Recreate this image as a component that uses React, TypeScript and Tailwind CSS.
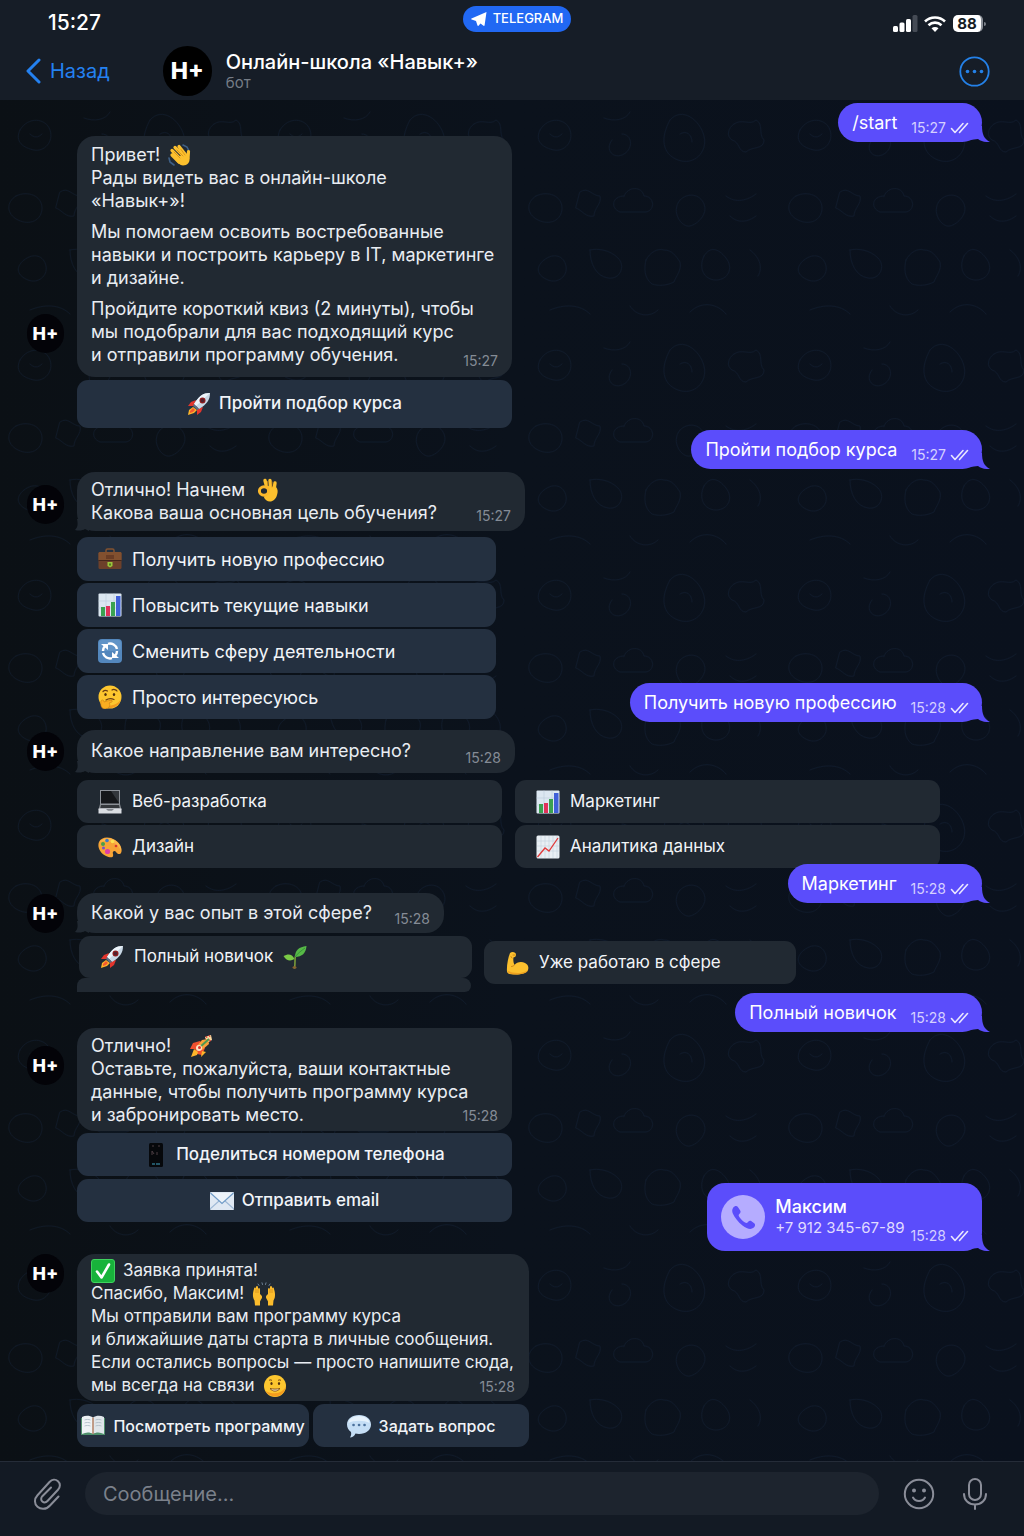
import React, { useState } from "react";
import clsx from "clsx";

type IconProps = { className?: string };

/* ---------- Emoji ---------- */

const emojiPaths: Record<string, React.ReactNode> = {
  wave: (
    <>
      <path d="M15 2l4 2 2 4M1 15l1 4 4 3" fill="none" stroke="#3f5f86" strokeWidth="1.6" strokeLinecap="round" />
      <g stroke="#fcc02e" strokeWidth="3.2" strokeLinecap="round">
        <path d="M4 12l7 7M4 7.500l9 9M7 4.500l9 9M11 3.500l8 10" />
        <path d="M20.500 8.500l-.5 7" />
      </g>
      <path d="M7 16l10-6 4 4c2 5-2 8.500-6 8.500-3 0-6-3-8-6.500z" fill="#fcc02e" />
      <path d="M6 9l6 6M9 7l6 6M13 6.500l4 5.500" stroke="#d58d16" strokeWidth=".8" strokeLinecap="round" />
    </>
  ),
  rocket: (
    <>
      <path d="M9 8l-5 2-3 4 6 0zM16 15l-2 5-4 3 0-6z" fill="#e2352d" />
      <path d="M6 15l-4 3-1 5 6-2 3-3z" fill="#fdb52a" />
      <path d="M6 16l-3 3 0 2 3-1 2-2z" fill="#f5582f" />
      <path d="M23 1c-7 0-11 3-16 11l5 5C20 12 23 8 23 1z" fill="#c9d8e6" />
      <path d="M23 1c-7 0-11 3-16 11l2 2z" fill="#edf4fa" />
      <circle cx="15.500" cy="8.500" r="3" fill="#8d1d1f" />
      <circle cx="15.500" cy="8.500" r="1.700" fill="#4f2230" />
      <path d="M7 12l5 5-2 1-4-4z" fill="#5d6d80" />
    </>
  ),
  firework: (
    <>
      <path d="M11 7l-7 2-3 6 5 0 2 5 5 1 3-7z" fill="#f0502e" />
      <path d="M5 15l-3 8 6-2 1-3zM13 17l-1 6 5-5z" fill="#fdb52a" />
      <path d="M16 3l6-2 1 5-5 3z" fill="#fbd9a0" />
      <path d="M19 5l-6 1-5 6 5 4 7-6z" fill="#f9a13a" />
      <path d="M20 5l-9 8" stroke="#4e9a53" strokeWidth="2" />
      <circle cx="10" cy="14" r="3" fill="#fde3c4" />
      <circle cx="10.500" cy="13.500" r="1.500" fill="#d9302c" />
      <path d="M20 1l1 2M17 2l1 2M22 7l-2-1" stroke="#e2352d" strokeWidth="1" />
    </>
  ),
  ok: (
    <>
      <path d="M10 10L8 2.500M13.500 10L13 2.500M17 12L18 5" stroke="#fcc02e" strokeWidth="3.400" strokeLinecap="round" />
      <path d="M10 8l9 1c2 2 2 5 1 8-1 4-4 6.500-7 6.500-3 0-5-2-6-4z" fill="#fcc02e" />
      <ellipse cx="7" cy="13" rx="4.600" ry="4.200" fill="#212932" stroke="#fcb82a" strokeWidth="3" />
      <path d="M10.500 3.500v4M15 4v5" stroke="#d58d16" strokeWidth=".8" fill="none" strokeLinecap="round" />
    </>
  ),
  briefcase: (
    <>
      <path d="M8 6V3.500C8 2.500 8.500 2 9.500 2h5c1 0 1.500.5 1.500 1.500V6" fill="none" stroke="#83522f" strokeWidth="1.500" />
      <rect x=".5" y="5" width="23" height="17" rx="1.500" fill="#6d402a" />
      <path d="M.5 6.500c0-1 .5-1.500 1.500-1.500h20c1 0 1.500.5 1.500 1.500V13H.5z" fill="#82502f" />
      <path d="M.5 13h23v1H.5z" fill="#45271b" />
      <rect x="8" y="8" width="8" height="4" fill="#693c25" />
      <path d="M9.500 15h5v4l-2.500 1.500L9.500 19z" fill="#9bc53d" />
      <path d="M11 16.500h2v2h-2z" fill="#527a20" />
    </>
  ),
  chart: (
    <>
      <rect x=".5" y=".5" width="23" height="23" rx="1" fill="#dce7f1" />
      <path d="M.5 8h23M.5 15h23M8 .5v23M16 .5v23" stroke="#bdcddc" strokeWidth=".6" />
      <path d="M3 14h4v9H3zM13 9h4v14h-4z" fill="#3ba151" />
      <path d="M8 13h4v10H8z" fill="#e0325a" />
      <path d="M18 3h4.500v20H18z" fill="#3f5fd8" />
    </>
  ),
  cycle: (
    <>
      <rect width="24" height="24" rx="4" fill="#5387bd" />
      <rect x="1" y="1" width="22" height="11" rx="3" fill="#6b9dcd" opacity=".6" />
      <path d="M10 4.800A7.300 7.300 0 0 1 19 10M14 19.200A7.300 7.300 0 0 1 5 14M5 12a7 7 0 0 1 2-5M19 12a7 7 0 0 1-2 5" fill="none" stroke="#fff" strokeWidth="2.400" />
      <path d="M3 5h7v6zM21 19h-7v-6z" fill="#fff" />
    </>
  ),
  thinking: (
    <>
      <circle cx="12" cy="12" r="11.500" fill="#fdc62f" />
      <path d="M4 20a11.500 11.500 0 0 0 19-6c-3 6-11 8-19 6z" fill="#f39a1d" />
      <path d="M5 6.500c1-1 3-1.300 4.500-.5M14 5c1.500-1 4-.5 5 1" stroke="#6b3d12" strokeWidth="1.200" fill="none" strokeLinecap="round" />
      <ellipse cx="7.500" cy="9.500" rx="1.200" ry="1.600" fill="#50300f" />
      <ellipse cx="16" cy="9.500" rx="1.200" ry="1.600" fill="#50300f" />
      <path d="M8 15c3-2 6-1.500 8-.5" stroke="#6b3d12" strokeWidth="1.200" fill="none" strokeLinecap="round" />
      <path d="M3 16c1-2 3-1 3 1 3-1 6-2 8-1.500 1 .8 0 1.800-3 2.500 2 2 0 6-4 6-3 0-5-3-4-8z" fill="#f9ad21" stroke="#c97a12" strokeWidth=".6" />
    </>
  ),
  laptop: (
    <>
      <path d="M2 0h20v14H2z" fill="#8d9299" />
      <path d="M3 1h18v12.500H3z" fill="#15171a" />
      <path d="M13 1h8v12z" fill="#33373c" />
      <path d="M2 14h20l1.500 6H.5z" fill="#8b8f95" />
      <path d="M3 15h18l.7 3H2.300z" fill="#34373b" />
      <path d="M.5 18.500h23V23.500H.5z" fill="#dadde2" />
      <path d="M8 19h8l-2 1.800h-4z" fill="#83878d" />
    </>
  ),
  palette: (
    <>
      <path d="M1 7c2-5 10-6 16-2 5 3 8 9 6 13-1 2-4 1-5-1s-4-1-3 2c1 4-3 4-7 2C2 18-1 12 1 7z" fill="#f7a436" />
      <path d="M2 7c2-4 9-5 15-2 4 3 7 7 6 11-3-7-10-12-21-9z" fill="#ffbd55" opacity=".7" />
      <circle cx="5" cy="9" r="2" fill="#4a9f4b" />
      <circle cx="9" cy="5.500" r="1.800" fill="#3c78c8" />
      <circle cx="14.500" cy="6.500" r="1.800" fill="#fbe14f" />
      <circle cx="18" cy="11" r="1.300" fill="#d9372f" />
      <circle cx="9.500" cy="16.500" r="2.600" fill="#df3fa5" />
      <circle cx="5.500" cy="13" r="1.500" fill="#7a51cc" />
    </>
  ),
  trend: (
    <>
      <rect x=".5" y=".5" width="23" height="23" rx="1.500" fill="#e9eff4" />
      <path d="M5 1v22M9 1v22M13 1v22M17 1v22M21 1v22M1 6h22M1 11h22M1 16h22" stroke="#c4d2de" strokeWidth=".6" />
      <path d="M1.500 22L9 13l4 3 9-13" fill="none" stroke="#e23b3b" strokeWidth="1.300" />
    </>
  ),
  seedling: (
    <>
      <path d="M11.500 23c1-5 0-9 1-12" stroke="#7a9b3a" strokeWidth="1.600" fill="none" strokeLinecap="round" />
      <path d="M12 12C12 5 16 2 23.500 1 23 8 19 12 12 12z" fill="#57b947" />
      <path d="M11.500 14C9 8.500 5 8.500.5 11c3 5 7 5.500 11 3z" fill="#7bcb46" />
      <path d="M12 12c3-4 6-6 10-9" stroke="#2d8a36" strokeWidth=".8" fill="none" />
      <ellipse cx="11.500" cy="22.500" rx="2" ry="1.200" fill="#88612f" />
    </>
  ),
  muscle: (
    <>
      <path d="M5 2c2-2 6-1 6 1.500S9.500 6 8.500 6.500C8 9 8.500 12 9.500 14c2-3 7-4 10.500-2 3 1.500 4 4 3 7-1 3-7 4.500-12 4.500-5 0-8.500 0-9-3C1.500 15 3 7 5 2z" fill="#fcc02e" />
      <path d="M2.500 19.500c5 3 14 4 20.500-.5-1 3.500-7 4.500-12 4.500-5 0-8-.5-8.500-4z" fill="#eda01f" />
      <path d="M9.500 14c-1 1-2 1.500-3 1.500M7 7L6 5.500M10 4H8" stroke="#c88114" strokeWidth=".9" fill="none" strokeLinecap="round" />
    </>
  ),
  phone: (
    <>
      <rect x="5" y="0" width="14" height="24" rx="1.500" fill="#06080b" />
      <path d="M8 3h2M14 3h2M8 8l2 3M8 8v4M13 9v3" stroke="#4a3d42" strokeWidth="1" />
      <path d="M8 21h3M12 21h4" stroke="#2c6f85" strokeWidth="1.400" />
    </>
  ),
  envelope: (
    <>
      <rect x="0" y="3" width="24" height="18" rx="1" fill="#dfe8f3" />
      <path d="M0 20l9-8M24 20l-9-8" stroke="#9db8d6" strokeWidth="1.100" />
      <path d="M.5 4L12 14.500 23.500 4" fill="#edf3fa" stroke="#6f9ac6" strokeWidth="1.200" />
    </>
  ),
  check: (
    <>
      <rect x=".5" y=".5" width="23" height="23" rx="2.500" fill="#18b33b" stroke="#3fd25e" />
      <path d="M6 12.500l4.500 6 7.500-13" fill="none" stroke="#fff" strokeWidth="2.600" strokeLinecap="round" strokeLinejoin="round" />
    </>
  ),
  hands: (
    <>
      <path d="M6 2l1 1.500M10 .8l.5 1.700M14 .8l-.5 1.700M18 2l-1 1.500" stroke="#6d8094" strokeWidth="1" strokeLinecap="round" />
      <path d="M2 7c0-2 2-2 2 0V5.500c0-2 2-2 2 0V7c1-2 2-1 2 1v4l1.500 1.500c1 1 .5 3-.5 4l-1 2v4H3l-.5-5C0 15 1 10 2 7z" fill="#fcbc2c" />
      <path d="M22 7c0-2-2-2-2 0V5.500c0-2-2-2-2 0V7c-1-2-2-1-2 1v4l-1.500 1.500c-1 1-.5 3 .5 4l1 2v4H21l.5-5C24 15 23 10 22 7z" fill="#fcbc2c" />
      <path d="M4 7v4M6 7v4M20 7v4M18 7v4" stroke="#cf8717" strokeWidth=".7" />
    </>
  ),
  smile: (
    <>
      <circle cx="12" cy="12" r="11" fill="#fdc62f" />
      <path d="M2.500 17A11 11 0 0 0 23 12c-2 6-11 10-20.500 5z" fill="#f49c1e" />
      <path d="M6 6.500c.8-.8 2-.8 3 0M15 6.500c1-.8 2-.8 3 0" stroke="#6b3d12" strokeWidth="1" fill="none" />
      <ellipse cx="8.500" cy="9.500" rx="1.100" ry="1.500" fill="#50300f" />
      <ellipse cx="16" cy="9.500" rx="1.100" ry="1.500" fill="#50300f" />
      <path d="M7 14.500c3 3.500 7 3.500 10 0-3 .8-7 .8-10 0z" fill="#fff1d0" stroke="#7a4712" strokeWidth=".9" />
    </>
  ),
  book: (
    <>
      <path d="M0 4h24v17H0z" fill="#4f8f6b" />
      <path d="M1 3c4-2 8-1.500 11 .5V20c-3-2-7-2-11 0z" fill="#eef2f5" />
      <path d="M23 3c-4-2-8-1.500-11 .5V20c3-2 7-2 11 0z" fill="#dfe5ea" />
      <path d="M12 3.500V20" stroke="#b07a5c" strokeWidth="1.400" />
      <path d="M3.500 6c2-.7 4-.7 6 0M3.500 9c2-.7 4-.7 6 0M3.500 12c2-.7 4-.7 6 0M14.500 6c2-.7 4-.7 6 0M14.500 9c2-.7 4-.7 6 0M14.500 12c2-.7 4-.7 6 0" stroke="#a9b7c3" strokeWidth=".8" fill="none" />
    </>
  ),
  speech: (
    <>
      <path d="M12 1c7 0 12 4 12 9.500S19 20 12 20c-1.500 0-2.500-.2-3.500-.5C7.500 22 5 23.500 3 23.500c1-1.500 1.500-3.500 1-5.500C1.500 16 0 13.500 0 10.500 0 5 5 1 12 1z" fill="#c5def5" />
      <path d="M12 2c6 0 10 3 10.500 7-5-3-16-3-21 0C2 5 6 2 12 2z" fill="#e6f2fc" />
      <path d="M6.500 11h.1M12 11h.1M17.500 11h.1" stroke="#4b719c" strokeWidth="2.600" strokeLinecap="round" />
    </>
  ),
};

function Emoji({ name, className = "h-6 w-6" }: { name: string } & IconProps) {
  return (
    <svg viewBox="0 0 24 24" aria-hidden="true" className={clsx("shrink-0", className)}>
      {emojiPaths[name]}
    </svg>
  );
}

/* ---------- Icons ---------- */

function Ticks() {
  return (
    <svg viewBox="0 0 20 12" fill="none" stroke="#e9e6ff" strokeWidth="1.600" strokeLinecap="round" strokeLinejoin="round" className="h-3 w-5">
      <path d="M1.500 6.500L5 10.500 13 1.500M9.500 10.500L17.500 1.500" />
    </svg>
  );
}

function Tail() {
  return (
    <svg viewBox="0 0 20 16" fill="#5b4dfb" className="absolute -right-2 bottom-0 h-4 w-5">
      <path d="M12 0c0 8 2 13 8 16-5 .3-9-.6-12-3L0 14V0z" />
    </svg>
  );
}

function BotTail() {
  return (
    <svg viewBox="0 0 14 12" fill="#212932" className="absolute -left-[2px] bottom-0 h-3 w-[14px]">
      <path d="M2 0c1 5 1 8-2 11 4 1 8 .5 10-1L14 12V0z" />
    </svg>
  );
}

function Doodles() {
  return (
    <svg aria-hidden="true" className="absolute inset-0 -z-10 h-full w-full">
      <defs>
        <pattern id="doodles" width="260" height="230" patternUnits="userSpaceOnUse">
          <g fill="none" stroke="#14233a" strokeWidth="1" strokeLinecap="round" opacity=".45">
            <path d="M20 30c8-14 26-12 30 0s-6 22-16 20-20-8-14-20zM30 34c4 4 8 4 12 0" />
            <path d="M84 18c10 4 22 2 26-6M92 40c-8 10 2 20 12 14s8-20-2-20" />
            <path d="M150 20c-10 18-8 34 8 40s30-8 26-24-22-30-34-16zM160 34c6-4 12 0 12 8" />
            <path d="M214 24c8-6 16 2 22-4 8 4 2 14 8 20 0 10-12 6-18 12-8 0-6-10-14-12-6-4-4-12 2-16z" />
            <path d="M16 96c12-6 26 0 26 12s-12 18-24 12-12-18-2-24zM60 92c8-6 12 4 20 4 2 8-6 12-6 20-8 2-12-6-18-8z" />
            <path d="M104 96c4-10 18-10 20 0 10 0 12 14 2 16h-26c-10-4-8-16 4-16z" />
            <path d="M160 100c8-8 20-6 24 4s-6 20-14 22-20-14-10-26zM206 96c10 8 22 4 30-2M210 116c8 8 18 6 26 0" />
            <path d="M24 160c10-8 20-4 22 6s-8 18-18 14-14-12-4-20zM70 150c0 14 6 26 18 28s18-12 10-20-20-10-28-8z" />
            <path d="M126 160c4-8 12-12 18-10 8 0 12 6 16 12 2 8-4 14-6 20-8 4-16 4-22 2-8-6-8-16-6-24zM184 156c-6 12 0 24 12 24s18-12 10-22-16-12-22-2zM230 150c8 6 14 16 8 26" />
            <path d="M30 210c14-6 30-6 40 4M110 206c6 10 20 12 28 4M170 212c12-12 28-8 36 2" />
          </g>
        </pattern>
      </defs>
      <rect width="100%" height="100%" fill="url(#doodles)" />
    </svg>
  );
}

/* ---------- Chat parts ---------- */

function Avatar({ className }: IconProps) {
  return (
    <div className={clsx("flex h-[39px] w-[37px] shrink-0 items-center justify-center rounded-full bg-[#030308] text-[18px] font-extrabold text-white", className)}>
      H+
    </div>
  );
}

function Line({ children, className = "gap-2" }: { children: React.ReactNode; className?: string }) {
  return <p className={clsx("flex h-[23px] items-center whitespace-nowrap", className)}>{children}</p>;
}

function BotMessage({ children, time, className, timeClass, avatarClass, size = "text-[18px]", tail }: {
  children: React.ReactNode;
  time: string;
  className: string;
  timeClass: string;
  avatarClass?: string;
  size?: string;
  tail?: boolean;
}) {
  return (
    <div className="flex gap-[13px]">
      <Avatar className={avatarClass} />
      <div className={clsx("relative max-w-full rounded-[18px] bg-[#212932] px-[14px] text-[#e9edf2]", size, className)}>
        {tail && <BotTail />}
        {children}
        <time className={clsx("block text-right text-[14px] leading-4 text-[#858c96]", timeClass)}>{time}</time>
      </div>
    </div>
  );
}

function BotButton({ emoji, label, variant = "blue", center, size = "text-[17px]", className, after }: {
  emoji: string;
  label: string;
  variant?: "blue" | "gray";
  center?: boolean;
  size?: string;
  className?: string;
  after?: string;
}) {
  return (
    <button
      type="button"
      className={clsx(
        "flex items-center whitespace-nowrap rounded-[11px] text-[#f1f4f8]",
        variant === "blue" ? "bg-[#243040]" : "bg-[#212932]",
        center ? "justify-center gap-2 font-medium" : "gap-[10px] pl-[21px]",
        size,
        className
      )}
    >
      <Emoji name={emoji} />
      <span>{label}</span>
      {after && <Emoji name={after} />}
    </button>
  );
}

function UserMessage({ text, time, className }: { text: string; time: string; className?: string }) {
  return (
    <div className={clsx("relative ml-auto flex h-[39px] w-fit shrink-0 items-center rounded-[20px] bg-[#5b4dfb] pl-[14px] pr-3 text-white", className)}>
      <Tail />
      <span className="relative whitespace-nowrap text-[18px]">{text}</span>
      <UserTime time={time} className="ml-[14px] mt-[11px]" />
    </div>
  );
}

function UserTime({ time, className }: { time: string; className?: string }) {
  return (
    <span className={clsx("relative flex items-center gap-1 text-[14px] leading-4 text-[#d5d0ff]", className)}>
      <time>{time}</time>
      <Ticks />
    </span>
  );
}

/* ---------- Header ---------- */

function StatusBar() {
  return (
    <div className="flex h-[42px] items-start px-[38px] pt-[6px]">
      <div className="mt-[5px] flex-1 basis-0 pl-[10px]">
        <time className="block text-[21px] font-medium leading-6 text-white">15:27</time>
      </div>
      <div className="flex h-[26px] items-center gap-[6px] rounded-full bg-[#2168f3] px-2 text-[13px] font-medium text-white">
        <svg viewBox="0 0 16 16" fill="#fff" className="h-4 w-4">
          <path d="M15.500 1L.5 7.500c-.5.3-.4.800.1 1L5 10l1.500 4.500c.2.500.7.500 1 .2l2-2.200 3 2.300c.5.300 1 .1 1.100-.5z" />
        </svg>
        TELEGRAM
      </div>
      <div className="mt-[9px] flex flex-1 basis-0 items-center justify-end">
        <svg viewBox="0 0 25 17" fill="#fff" className="h-[17px] w-[25px]">
          <rect x="0" y="11" width="5" height="6" rx="1.500" />
          <rect x="6.500" y="7.500" width="5" height="9.500" rx="1.500" />
          <rect x="13" y="4" width="5" height="13" rx="1.500" />
          <rect x="19.500" y="0" width="5" height="17" rx="1.500" fill="#454b55" />
        </svg>
        <svg viewBox="0 0 22 16" fill="none" stroke="#fff" strokeWidth="2.600" className="ml-[6px] h-4 w-[22px]">
          <path d="M1 5.500c5.500-5.300 14.500-5.300 20 0M4.500 9.200c3.700-3.400 9.300-3.400 13 0" />
          <path d="M7.500 12.300c2-1.800 5-1.800 7 0L11 16z" fill="#fff" stroke="none" />
        </svg>
        <div className="ml-[7px] flex h-[17px] w-[30px] items-center justify-center rounded-[5px] border-r-2 border-[#8c9199] bg-white text-[15px] font-bold leading-none text-[#151b24]">88</div>
        <div className="ml-px h-1 w-[2px] rounded-r bg-[#7b818a]" />
      </div>
    </div>
  );
}

function ChatHeader() {
  return (
    <header className="bg-[#161d27]">
      <StatusBar />
      <div className="flex h-[58px] items-center pl-[25px] pr-[34px]">
        <button type="button" className="flex items-center gap-[8px] text-[20px] text-[#2481f0]">
          <svg viewBox="0 0 17 26" fill="none" stroke="currentColor" strokeWidth="3" strokeLinecap="round" strokeLinejoin="round" className="h-[26px] w-[17px]">
            <path d="M14 2L3 13l11 11" />
          </svg>
          Назад
        </button>
        <div className="ml-[53px] flex h-[50px] w-[49px] items-center justify-center rounded-full bg-black text-[23px] font-extrabold text-white">H+</div>
        <div className="ml-[14px]">
          <h1 className="text-[20px] font-medium leading-6 text-white">Онлайн-школа «Навык+»</h1>
          <p className="text-[15px] leading-[18px] text-[#757c86]">бот</p>
        </div>
        <button type="button" aria-label="Меню" className="ml-auto">
          <svg viewBox="0 0 31 31" className="h-[31px] w-[31px]">
            <circle cx="15.500" cy="15.500" r="14.200" fill="none" stroke="#2481e8" strokeWidth="1.800" />
            <g fill="#2481e8">
              <circle cx="8.500" cy="15.500" r="1.800" />
              <circle cx="15.500" cy="15.500" r="1.800" />
              <circle cx="22.500" cy="15.500" r="1.800" />
            </g>
          </svg>
        </button>
      </div>
    </header>
  );
}

/* ---------- Footer ---------- */

function Composer() {
  const [value, setValue] = useState("");

  return (
    <footer className="flex h-[75px] items-start border-t border-[#252c38] bg-[#131a24] pl-[33px] pr-[37px] pt-[10px] text-[#8a8d98]">
      <button type="button" aria-label="Прикрепить файл" className="mt-[6px]">
        <svg viewBox="0 0 28 32" fill="none" stroke="currentColor" strokeWidth="2" strokeLinecap="round" strokeLinejoin="round" className="h-8 w-7">
          <path d="M25.500 18.500L17 27.500c-4 4.500-9.500 4-12.500 1.300-3.500-3-3.300-8 0-11.500L16.500 4C19 1.300 22.500 1 25 3.200s2.500 6 0 8.500L14.500 23c-1.500 1.600-3.700 1.700-5.200.4s-1.500-3.500 0-5.200L18 9.500" />
        </svg>
      </button>
      <input
        type="text"
        aria-label="Сообщение"
        placeholder="Сообщение..."
        value={value}
        onChange={(e) => setValue(e.target.value)}
        className="ml-6 h-[43px] min-w-0 flex-1 rounded-full bg-[#1d242e] px-[18px] text-[20px] text-white outline-none placeholder:text-[#7b818b]"
      />
      <button type="button" aria-label="Эмодзи" className="ml-6 mt-[6px]">
        <svg viewBox="0 0 32 32" fill="none" stroke="currentColor" strokeWidth="2" strokeLinecap="round" className="h-8 w-8">
          <circle cx="16" cy="16" r="14.200" />
          <circle cx="11" cy="12.500" r="1" fill="currentColor" />
          <circle cx="21" cy="12.500" r="1" fill="currentColor" />
          <path d="M10 19.500c2.500 4.500 9.500 4.500 12 0" />
        </svg>
      </button>
      <button type="button" aria-label="Голосовое сообщение" className="ml-[28px] mt-[6px]">
        <svg viewBox="0 0 24 32" fill="none" stroke="currentColor" strokeWidth="2" strokeLinecap="round" className="h-8 w-6">
          <rect x="6" y="1" width="12" height="21" rx="6" />
          <path d="M1 16c0 6 4.500 10.500 11 10.500S23 22 23 16M12 26.500V31" />
        </svg>
      </button>
    </footer>
  );
}

const goals = [
  { emoji: "briefcase", label: "Получить новую профессию" },
  { emoji: "chart", label: "Повысить текущие навыки" },
  { emoji: "cycle", label: "Сменить сферу деятельности" },
  { emoji: "thinking", label: "Просто интересуюсь" },
];

const directions = [
  { emoji: "laptop", label: "Веб-разработка" },
  { emoji: "chart", label: "Маркетинг" },
  { emoji: "palette", label: "Дизайн" },
  { emoji: "trend", label: "Аналитика данных" },
];

export default function App() {
  return (
    <div className="flex min-h-screen flex-col bg-[#0b121c] font-['Inter','Liberation_Sans',sans-serif]">
      <ChatHeader />

      <main className="relative isolate flex-1 bg-linear-to-r from-[#0b1015] via-[#0b121c] to-[#0a111d] pb-[14px] pl-[27px] pr-[42px] pt-[3px]">
        <Doodles />

        <UserMessage text="/start" time="15:27" />

        {/* Приветствие */}
        <section className="-mt-[6px]">
          <BotMessage time="15:27" className="w-[435px] pb-2 pt-[7px]" timeClass="-mt-[13px]" avatarClass="mb-6 self-end">
            <Line>Привет! <Emoji name="wave" /></Line>
            <Line>Рады видеть вас в онлайн-школе</Line>
            <Line>«Навык+»!</Line>
            <Line className="mt-2">Мы помогаем освоить востребованные</Line>
            <Line>навыки и построить карьеру в IT, маркетинге</Line>
            <Line>и дизайне.</Line>
            <Line className="mt-2">Пройдите короткий квиз (2 минуты), чтобы</Line>
            <Line>мы подобрали для вас подходящий курс</Line>
            <Line>и отправили программу обучения.</Line>
          </BotMessage>
          <BotButton emoji="rocket" label="Пройти подбор курса" center className="ml-[50px] mt-[3px] h-12 w-[435px]" />
        </section>

        <UserMessage text="Пройти подбор курса" time="15:27" className="mt-[2px]" />

        {/* Цель обучения */}
        <section className="mt-[3px] flex items-end justify-between">
          <div>
            <BotMessage time="15:27" tail className="w-[448px] pb-[7px] pt-[6px]" timeClass="-mt-4" avatarClass="mt-[13px]">
              <Line className="gap-3">Отлично! Начнем <Emoji name="ok" /></Line>
              <Line>Какова ваша основная цель обучения?</Line>
            </BotMessage>
            <div className="ml-[50px] mt-[6px] flex w-[419px] flex-col gap-[2px]">
              {goals.map((goal) => (
                <BotButton key={goal.label} emoji={goal.emoji} label={goal.label} size="text-[18px]" className="h-11" />
              ))}
            </div>
          </div>
          <UserMessage text="Получить новую профессию" time="15:28" className="-mb-[3px]" />
        </section>

        {/* Направление */}
        <section className="mt-[11px]">
          <BotMessage time="15:28" tail className="w-[438px] pb-[7px] pt-[9px]" timeClass="-mt-3" avatarClass="mt-[2px]">
            <Line>Какое направление вам интересно?</Line>
          </BotMessage>
          <div className="ml-[50px] mr-[42px] mt-[7px] grid grid-cols-2 gap-x-[13px] gap-y-[2px]">
            {directions.map((item) => (
              <BotButton key={item.label} emoji={item.emoji} label={item.label} variant="gray" className="h-[43px]" />
            ))}
          </div>
        </section>

        <UserMessage text="Маркетинг" time="15:28" className="-mt-1" />

        {/* Опыт */}
        <section className="-mt-[10px]">
          <BotMessage time="15:28" tail className="w-[367px] pb-[6px] pt-2" timeClass="-mt-[13px]" avatarClass="mt-px">
            <Line>Какой у вас опыт в этой сфере?</Line>
          </BotMessage>
          <div className="ml-[50px] mt-[3px] flex items-start gap-3">
            <div className="w-[395px]">
              <BotButton emoji="rocket" label="Полный новичок" after="seedling" variant="gray" className="ml-[2px] h-[42px] w-[393px]" />
              <div className="h-[14px] w-[394px] rounded-b-[8px] rounded-t-[10px] rounded-bl-none bg-[#212932]" />
            </div>
            <BotButton emoji="muscle" label="Уже работаю в сфере" variant="gray" className="mt-[5px] h-[43px] w-[312px]" />
          </div>
        </section>

        <UserMessage text="Полный новичок" time="15:28" className="mt-px" />

        {/* Контакты */}
        <section className="-mt-1 flex items-end justify-between">
          <div>
            <BotMessage time="15:28" className="w-[435px] pb-[7px] pt-[6px]" timeClass="-mt-[18px]" avatarClass="mt-[18px]">
              <Line className="gap-[18px]">Отлично! <Emoji name="firework" /></Line>
              <Line>Оставьте, пожалуйста, ваши контактные</Line>
              <Line>данные, чтобы получить программу курса</Line>
              <Line>и забронировать место.</Line>
            </BotMessage>
            <div className="ml-[50px] mt-[2px] flex w-[435px] flex-col gap-[3px]">
              <BotButton emoji="phone" label="Поделиться номером телефона" center className="h-[43px]" />
              <BotButton emoji="envelope" label="Отправить email" center className="h-[43px]" />
            </div>
          </div>

          <div className="relative -mb-[29px] flex h-[68px] shrink-0 items-center rounded-[18px] bg-[#5b4dfb] pl-[14px] pr-3 text-white">
            <Tail />
            <svg viewBox="0 0 44 44" className="h-11 w-11">
              <circle cx="22" cy="22" r="22" fill="#b5acff" />
              <path d="M12 13c1.500-2 3.500-2.500 4.700-1.200l2.500 3.700c.8 1.300.3 2.500-.9 3.500-1 .8-.8 1.800.2 3.200 1.500 2.200 3.500 4.200 5.500 5.300 1.300.7 2.200.5 3-.5 1-1.200 2.200-1.500 3.500-.7l3 2.300c1 1 .7 2.900-1 4.200-2.500 2-6.500 1.200-11-2.300-4.500-3.700-8-8-9.700-12-.8-2.200-.8-4 .2-5.500z" fill="#5b4dfb" />
            </svg>
            <div className="ml-[10px]">
              <p className="text-[18px] font-medium leading-[22px]">Максим</p>
              <p className="text-[15px] leading-5 text-[#e0dcff]">+7 912 345-67-89</p>
            </div>
            <UserTime time="15:28" className="mb-[7px] ml-[6px] self-end" />
          </div>
        </section>

        {/* Заявка принята */}
        <section className="mt-8">
          <BotMessage time="15:28" size="text-[17px]" className="w-[452px] pb-[6px] pt-[5px]" timeClass="-mt-[18px]">
            <Line><Emoji name="check" />Заявка принята!</Line>
            <Line>Спасибо, Максим! <Emoji name="hands" /></Line>
            <Line>Мы отправили вам программу курса</Line>
            <Line>и ближайшие даты старта в личные сообщения.</Line>
            <Line>Если остались вопросы — просто напишите сюда,</Line>
            <Line>мы всегда на связи <Emoji name="smile" /></Line>
          </BotMessage>
          <div className="ml-[50px] mt-[3px] flex w-[452px] gap-1">
            <BotButton emoji="book" label="Посмотреть программу" center size="text-[16px]" className="h-[43px] w-[232px]" />
            <BotButton emoji="speech" label="Задать вопрос" center size="text-[16px]" className="h-[43px] flex-1" />
          </div>
        </section>
      </main>

      <Composer />
    </div>
  );
}
